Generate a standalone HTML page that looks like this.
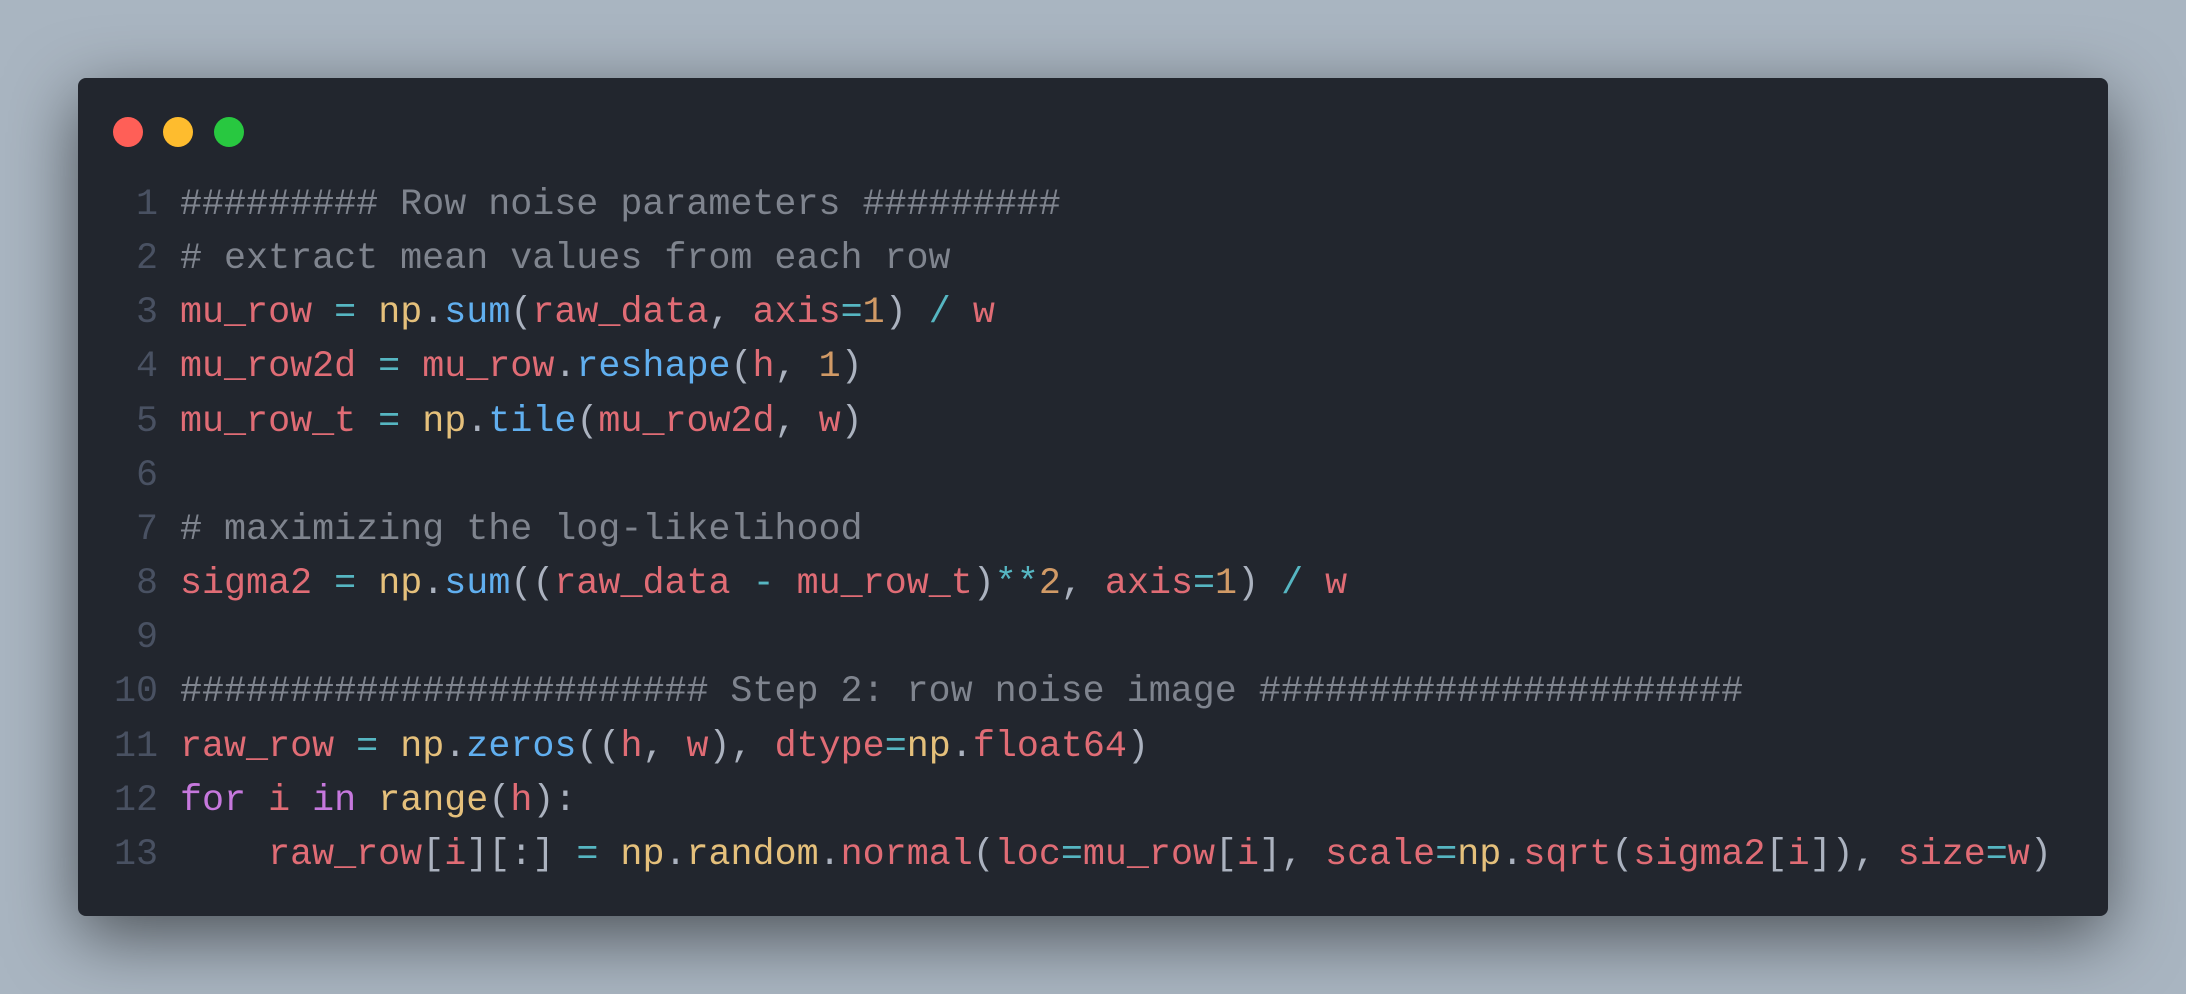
<!DOCTYPE html>
<html><head><meta charset="utf-8"><style>
html,body{margin:0;padding:0}
body{width:2186px;height:994px;background:#a9b5c1;position:relative;overflow:hidden}
.win{position:absolute;left:78px;top:78px;width:2030px;height:838px;background:#22262e;border-radius:8px;box-shadow:0 20px 70px rgba(0,0,0,.55)}
.dot{position:absolute;top:117px;width:30px;height:30px;border-radius:50%}
.code{position:absolute;left:0;top:178px;font-family:"Liberation Mono",monospace;font-size:36.7px;line-height:54.15px;white-space:pre;color:#abb2bf}
.ln{display:inline-block;width:158px;text-align:right;color:#495162;margin-right:22px}
.c{color:#7f848e}.r{color:#e06c75}.y{color:#e5c07b}.b{color:#61afef}.t{color:#56b6c2}.o{color:#d19a66}.p{color:#c678dd}
</style></head><body>
<div class="win"></div>
<div class="dot" style="left:113px;background:#ff5f57"></div>
<div class="dot" style="left:163px;background:#febc2e"></div>
<div class="dot" style="left:214px;background:#28c840"></div>
<div class="code"><div><span class="ln">1</span><span class="c">######### Row noise parameters #########</span></div><div><span class="ln">2</span><span class="c"># extract mean values from each row</span></div><div><span class="ln">3</span><span class="r">mu_row</span> <span class="t">=</span> <span class="y">np</span>.<span class="b">sum</span>(<span class="r">raw_data</span>, <span class="r">axis</span><span class="t">=</span><span class="o">1</span>) <span class="t">/</span> <span class="r">w</span></div><div><span class="ln">4</span><span class="r">mu_row2d</span> <span class="t">=</span> <span class="r">mu_row</span>.<span class="b">reshape</span>(<span class="r">h</span>, <span class="o">1</span>)</div><div><span class="ln">5</span><span class="r">mu_row_t</span> <span class="t">=</span> <span class="y">np</span>.<span class="b">tile</span>(<span class="r">mu_row2d</span>, <span class="r">w</span>)</div><div><span class="ln">6</span></div><div><span class="ln">7</span><span class="c"># maximizing the log-likelihood</span></div><div><span class="ln">8</span><span class="r">sigma2</span> <span class="t">=</span> <span class="y">np</span>.<span class="b">sum</span>((<span class="r">raw_data</span> <span class="t">-</span> <span class="r">mu_row_t</span>)<span class="t">**</span><span class="o">2</span>, <span class="r">axis</span><span class="t">=</span><span class="o">1</span>) <span class="t">/</span> <span class="r">w</span></div><div><span class="ln">9</span></div><div><span class="ln">10</span><span class="c">######################## Step 2: row noise image ######################</span></div><div><span class="ln">11</span><span class="r">raw_row</span> <span class="t">=</span> <span class="y">np</span>.<span class="b">zeros</span>((<span class="r">h</span>, <span class="r">w</span>), <span class="r">dtype</span><span class="t">=</span><span class="y">np</span>.<span class="r">float64</span>)</div><div><span class="ln">12</span><span class="p">for</span> <span class="r">i</span> <span class="p">in</span> <span class="y">range</span>(<span class="r">h</span>):</div><div><span class="ln">13</span>    <span class="r">raw_row</span>[<span class="r">i</span>][:] <span class="t">=</span> <span class="y">np</span>.<span class="y">random</span>.<span class="r">normal</span>(<span class="r">loc</span><span class="t">=</span><span class="r">mu_row</span>[<span class="r">i</span>], <span class="r">scale</span><span class="t">=</span><span class="y">np</span>.<span class="r">sqrt</span>(<span class="r">sigma2</span>[<span class="r">i</span>]), <span class="r">size</span><span class="t">=</span><span class="r">w</span>)</div></div>
</body></html>
